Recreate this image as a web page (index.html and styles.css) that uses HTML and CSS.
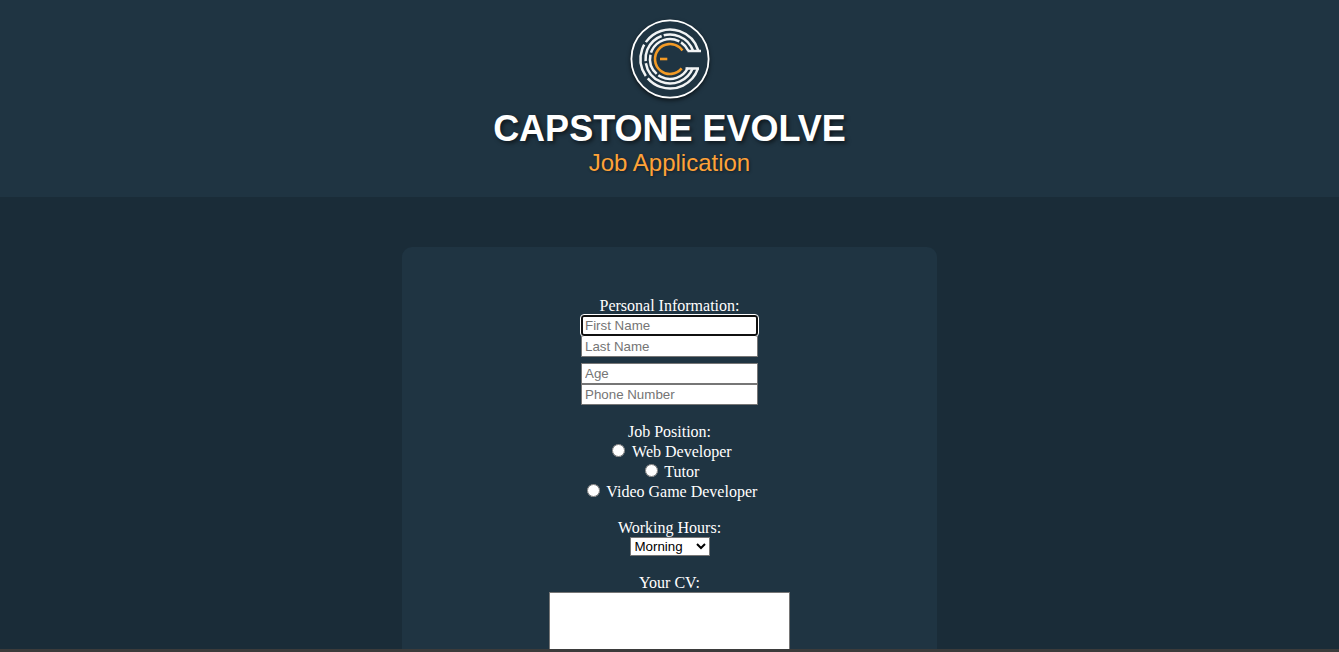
FILE: index.html
```html
<!DOCTYPE html>
<html lang="en">
<head>
<meta charset="utf-8">
<title>Capstone Evolve - Job Application</title>
<link rel="stylesheet" href="styles.css">
</head>
<body>
<div class="viewport">
  <header class="site-header">
    <svg class="logo" viewBox="-41 -41 82 82" width="82" height="82" aria-hidden="true">
      <circle class="ring" r="38.6"/>
      <circle class="arc" r="29.5" pathLength="360" transform="rotate(19)" stroke-dasharray="120 6 64 6 128 36"/>
      <circle class="arc" r="24.5" pathLength="360" transform="rotate(22)" stroke-dasharray="148 5 75 5 87 40"/>
      <circle class="arc" r="20" pathLength="360" transform="rotate(26)" stroke-dasharray="100 6 60 6 100 6 32 50"/>
      <path class="arc" d="M17.5 -8H31M15.5 9.5H29"/>
      <circle class="orange" r="15" pathLength="360" transform="rotate(39)" stroke-dasharray="287 73"/>
      <path class="orange" d="M-10 0H-2.7"/>
    </svg>
    <h1 class="title">CAPSTONE EVOLVE</h1>
    <p class="subtitle">Job Application</p>
  </header>
  <main class="content">
    <form class="card">
      <section class="group personal">
        <div class="label">Personal Information:</div>
        <div class="inputs">
          <input class="field focused" type="text" placeholder="First Name">
          <input class="field" type="text" placeholder="Last Name">
        </div>
        <div class="inputs second">
          <input class="field" type="text" placeholder="Age">
          <input class="field" type="text" placeholder="Phone Number">
        </div>
      </section>
      <section class="group jobs">
        <div class="label">Job Position:</div>
        <label class="radio-row"><input class="radio" type="radio" name="job"> Web Developer</label>
        <label class="radio-row"><input class="radio" type="radio" name="job"> Tutor</label>
        <label class="radio-row"><input class="radio" type="radio" name="job"> Video Game Developer</label>
      </section>
      <section class="group hours">
        <div class="label">Working Hours:</div>
        <select class="select"><option>Morning</option></select>
      </section>
      <section class="group cv">
        <div class="label">Your CV:</div>
        <textarea class="cv-box"></textarea>
      </section>
    </form>
  </main>
  <div class="strip"></div>
</div>
</body>
</html>
```
FILE: styles.css
```css
* { box-sizing: border-box; }
html, body { margin: 0; height: 100%; }
body {
  font-family: "Liberation Serif", "Times New Roman", serif;
  font-size: 16px;
  color: #fff;
  background: #1a2c38;
}
.viewport {
  height: 652px;
  display: flex;
  flex-direction: column;
  overflow: hidden;
}
.site-header {
  flex: none;
  height: 197px;
  padding-top: 18px;
  background: #1f3442;
  display: flex;
  flex-direction: column;
  align-items: center;
  font-family: "Liberation Sans", Arial, sans-serif;
}
.logo { display: block; filter: drop-shadow(0 2px 2px rgba(0,0,0,.6)); }
.ring { fill: #1f3442; stroke: #fff; stroke-width: 1.8; }
.arc { fill: none; stroke: #f2f4f5; stroke-width: 2.5; }
.orange { fill: none; stroke: #f39a25; stroke-width: 2.6; }
.title {
  margin: 8px 0 0;
  font-size: 36px;
  line-height: 41px;
  font-weight: 700;
  color: #fff;
  text-shadow: 2px 2px 4px rgba(0,0,0,.6);
}
.subtitle {
  margin: 0;
  font-size: 24px;
  line-height: 28px;
  color: #ffa238;
  text-shadow: 1px 1px 3px rgba(0,0,0,.45);
}
.content {
  flex: 1;
  min-height: 0;
  overflow: hidden;
  padding-top: 50px;
  display: flex;
  justify-content: center;
}
.card {
  width: 535px;
  height: 600px;
  flex: none;
  background: #1f3442;
  border-radius: 10px;
  padding-top: 50px;
  display: flex;
  flex-direction: column;
  align-items: center;
}
.group {
  display: flex;
  flex-direction: column;
  align-items: center;
}
.label { line-height: 18px; }
.inputs { display: flex; flex-direction: column; }
.second { margin-top: 6px; }
.field {
  display: block;
  width: 177px;
  height: 21px;
  margin: 0;
  padding: 1px 3px;
  border: 1px solid #767676;
  border-radius: 0;
  background: #fff;
  font-family: "Liberation Sans", Arial, sans-serif;
  font-size: 13.33px;
  color: #000;
}
.field::placeholder { color: #757575; opacity: 1; }
.focused {
  position: relative;
  border: 2px solid #101010;
  border-radius: 3px;
  outline: 1px solid #fff;
  padding: 0 2px;
}
.jobs { margin-top: 18px; }
.radio-row { display: block; height: 20px; line-height: 20px; text-align: center; white-space: pre-wrap; }
.radio { width: 13px; height: 13px; margin: 3px 3px 0 5px; }
.hours { margin-top: 18px; }
.select {
  width: 80px;
  height: 19px;
  padding: 0;
  border: 1px solid #767676;
  border-radius: 0;
  background: #fff;
  color: #000;
  font-family: "Liberation Sans", Arial, sans-serif;
  font-size: 13.33px;
}
.cv { margin-top: 18px; }
.cv-box {
  display: block;
  width: 241px;
  height: 100px;
  margin: 0;
  background: #fff;
  border: 1px solid #767676;
  border-radius: 0;
  resize: none;
}
.strip { flex: none; height: 3px; background: #3b3b3b; }
```
